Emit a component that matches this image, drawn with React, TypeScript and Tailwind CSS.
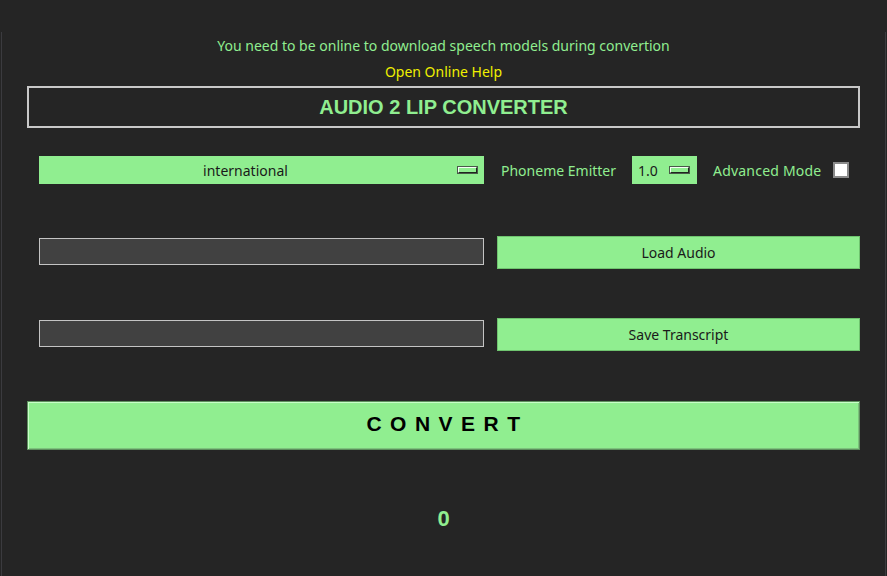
import React from "react";

function DropIndicator() {
    return (
        <span className="inline-block w-[19px] h-[6px] bg-[#90ee90] border border-t-[#f4fff4] border-l-[#f4fff4] border-b-[#1e261e] border-r-[#1e261e] shadow-[0_0_0_1px_#4a5a4a]" />
    );
}

export default function App() {
    return (
        <div
            className="w-[887px] h-[576px] bg-[#252525] pt-[32px] px-[1px] overflow-hidden"
            style={{ fontFamily: '"Noto Sans", "Open Sans", sans-serif' }}
        >
            <div className="h-full border-x border-[#3b3b3f] px-[25px] flex flex-col">
                <p className="pt-[5px] text-center text-[14px] leading-[18px] text-[#90ee90]">
                    You need to be online to download speech models during convertion
                </p>
                <p className="mt-[8px] text-center text-[14px] leading-[18px] text-[#f0f000]">
                    Open Online Help
                </p>

                <div className="mt-[5px] h-[42px] border-2 border-[#c8c8c8] flex items-center justify-center">
                    <span className="font-['Liberation_Sans',Arial,sans-serif] font-bold text-[20px] text-[#90ee90]">
                        AUDIO 2 LIP CONVERTER
                    </span>
                </div>

                <div className="mt-[28px] pl-[12px] flex items-center h-[28px] text-[14px]">
                    <div className="w-[445px] h-[28px] bg-[#90ee90] flex items-center text-[#1a1a1a]">
                        <span className="flex-1 text-center">international</span>
                        <span className="ml-[6px] mr-[7px] flex">
                            <DropIndicator />
                        </span>
                    </div>
                    <span className="ml-[17px] text-[#90ee90]">Phoneme Emitter</span>
                    <div className="ml-[16px] w-[65px] h-[28px] bg-[#90ee90] flex items-center justify-between pl-[6px] pr-[8px] text-[#1a1a1a]">
                        1.0
                        <DropIndicator />
                    </div>
                    <span className="ml-[16px] text-[#90ee90] tracking-[0.2px]">Advanced Mode</span>
                    <span className="ml-[12px] w-[16px] h-[16px] bg-white border-2 border-[#8a8a8a]" />
                </div>

                <div className="mt-[52px] pl-[12px] flex items-start gap-[13px] text-[14px]">
                    <div className="mt-[2px] w-[445px] h-[27px] bg-[#414141] border border-[#c4c4c4]" />
                    <button className="flex-1 h-[33px] bg-[#90ee90] border border-[#6fc46f] text-[#1a1a1a]">
                        Load Audio
                    </button>
                </div>

                <div className="mt-[49px] pl-[12px] flex items-start gap-[13px] text-[14px]">
                    <div className="mt-[2px] w-[445px] h-[27px] bg-[#414141] border border-[#c4c4c4]" />
                    <button className="flex-1 h-[33px] bg-[#90ee90] border border-[#6fc46f] text-[#1a1a1a]">
                        Save Transcript
                    </button>
                </div>

                <button className="mt-[50px] h-[49px] pb-[3px] bg-[#90ee90] border border-[#5d8f5d] shadow-[inset_1px_1px_0_#c8ffc8,inset_-1px_-1px_0_#7cc27c] flex items-center justify-center">
                    <span className="font-['Liberation_Sans',Arial,sans-serif] font-bold text-[21px] tracking-[8.5px] pl-[8px] text-black">
                        CONVERT
                    </span>
                </button>

                <p className="mt-[55px] text-center font-['Liberation_Sans',Arial,sans-serif] font-bold text-[22px] leading-[28px] text-[#90ee90]">
                    0
                </p>
            </div>
        </div>
    );
}
